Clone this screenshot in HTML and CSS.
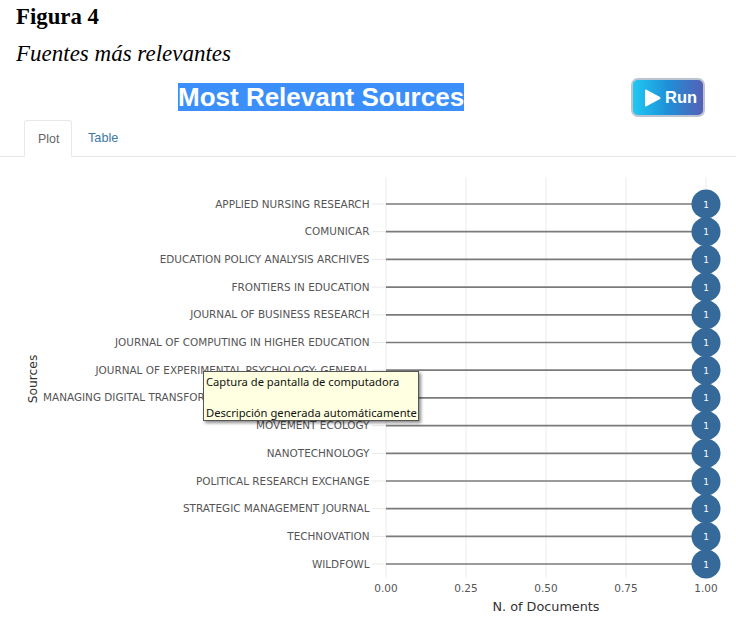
FILE: index.html
```html
<!DOCTYPE html>
<html lang="es">
<head>
<meta charset="utf-8">
<title>Figura 4</title>
<link rel="stylesheet" href="styles.css">
</head>
<body>
<div class="page">
  <h1 class="fig-num">Figura 4</h1>
  <p class="fig-title">Fuentes más relevantes</p>
  <div class="title-row">
    <h2 class="app-title"><span class="selected">Most Relevant Sources</span></h2>
    <button class="run-btn" type="button">
      <svg class="run-icon" width="17" height="18" viewBox="0 0 17 18"><path d="M1 1.5 Q1 0 2.4 .7 L16 8 Q17 9 16 10 L2.4 17.3 Q1 18 1 16.5 Z" fill="#fff"/></svg>
      <span>Run</span>
    </button>
  </div>
  <div class="tabs">
    <a class="tab active">Plot</a>
    <a class="tab">Table</a>
  </div>
  <div class="plot">
    <svg class="chart" width="736" height="465" viewBox="0 157 736 465">
      <g class="grid">
        <line x1="386" x2="386" y1="177" y2="578"/>
        <line x1="466" x2="466" y1="177" y2="578"/>
        <line x1="546" x2="546" y1="177" y2="578"/>
        <line x1="626" x2="626" y1="177" y2="578"/>
        <line x1="706" x2="706" y1="177" y2="578"/>
      </g>
      <g class="rows">
        <g><line class="tick" x1="372" x2="386" y1="204" y2="204"/><line class="stem" x1="386" x2="706" y1="204" y2="204"/><circle cx="706" cy="204" r="14.5"/><text class="val" x="706" y="207.5">1</text><text class="lab" x="369.5" y="207.5">APPLIED NURSING RESEARCH</text></g>
        <g><line class="tick" x1="372" x2="386" y1="231.7" y2="231.7"/><line class="stem" x1="386" x2="706" y1="231.7" y2="231.7"/><circle cx="706" cy="231.7" r="14.5"/><text class="val" x="706" y="235.2">1</text><text class="lab" x="369.5" y="235.2">COMUNICAR</text></g>
        <g><line class="tick" x1="372" x2="386" y1="259.4" y2="259.4"/><line class="stem" x1="386" x2="706" y1="259.4" y2="259.4"/><circle cx="706" cy="259.4" r="14.5"/><text class="val" x="706" y="262.9">1</text><text class="lab" x="369.5" y="262.9">EDUCATION POLICY ANALYSIS ARCHIVES</text></g>
        <g><line class="tick" x1="372" x2="386" y1="287.1" y2="287.1"/><line class="stem" x1="386" x2="706" y1="287.1" y2="287.1"/><circle cx="706" cy="287.1" r="14.5"/><text class="val" x="706" y="290.6">1</text><text class="lab" x="369.5" y="290.6">FRONTIERS IN EDUCATION</text></g>
        <g><line class="tick" x1="372" x2="386" y1="314.8" y2="314.8"/><line class="stem" x1="386" x2="706" y1="314.8" y2="314.8"/><circle cx="706" cy="314.8" r="14.5"/><text class="val" x="706" y="318.3">1</text><text class="lab" x="369.5" y="318.3">JOURNAL OF BUSINESS RESEARCH</text></g>
        <g><line class="tick" x1="372" x2="386" y1="342.5" y2="342.5"/><line class="stem" x1="386" x2="706" y1="342.5" y2="342.5"/><circle cx="706" cy="342.5" r="14.5"/><text class="val" x="706" y="346">1</text><text class="lab" x="369.5" y="346">JOURNAL OF COMPUTING IN HIGHER EDUCATION</text></g>
        <g><line class="tick" x1="372" x2="386" y1="370.2" y2="370.2"/><line class="stem" x1="386" x2="706" y1="370.2" y2="370.2"/><circle cx="706" cy="370.2" r="14.5"/><text class="val" x="706" y="373.7">1</text><text class="lab" x="369.5" y="373.7">JOURNAL OF EXPERIMENTAL PSYCHOLOGY: GENERAL</text></g>
        <g><line class="tick" x1="372" x2="386" y1="397.9" y2="397.9"/><line class="stem" x1="386" x2="706" y1="397.9" y2="397.9"/><circle cx="706" cy="397.9" r="14.5"/><text class="val" x="706" y="401.4">1</text><text class="lab lab-start" x="43" y="401.4">MANAGING DIGITAL TRANSFORMATION</text></g>
        <g><line class="tick" x1="372" x2="386" y1="425.6" y2="425.6"/><line class="stem" x1="386" x2="706" y1="425.6" y2="425.6"/><circle cx="706" cy="425.6" r="14.5"/><text class="val" x="706" y="429.1">1</text><text class="lab" x="369.5" y="429.1">MOVEMENT ECOLOGY</text></g>
        <g><line class="tick" x1="372" x2="386" y1="453.3" y2="453.3"/><line class="stem" x1="386" x2="706" y1="453.3" y2="453.3"/><circle cx="706" cy="453.3" r="14.5"/><text class="val" x="706" y="456.8">1</text><text class="lab" x="369.5" y="456.8">NANOTECHNOLOGY</text></g>
        <g><line class="tick" x1="372" x2="386" y1="481" y2="481"/><line class="stem" x1="386" x2="706" y1="481" y2="481"/><circle cx="706" cy="481" r="14.5"/><text class="val" x="706" y="484.5">1</text><text class="lab" x="369.5" y="484.5">POLITICAL RESEARCH EXCHANGE</text></g>
        <g><line class="tick" x1="372" x2="386" y1="508.7" y2="508.7"/><line class="stem" x1="386" x2="706" y1="508.7" y2="508.7"/><circle cx="706" cy="508.7" r="14.5"/><text class="val" x="706" y="512.2">1</text><text class="lab" x="369.5" y="512.2">STRATEGIC MANAGEMENT JOURNAL</text></g>
        <g><line class="tick" x1="372" x2="386" y1="536.4" y2="536.4"/><line class="stem" x1="386" x2="706" y1="536.4" y2="536.4"/><circle cx="706" cy="536.4" r="14.5"/><text class="val" x="706" y="539.9">1</text><text class="lab" x="369.5" y="539.9">TECHNOVATION</text></g>
        <g><line class="tick" x1="372" x2="386" y1="564" y2="564"/><line class="stem" x1="386" x2="706" y1="564" y2="564"/><circle cx="706" cy="564" r="14.5"/><text class="val" x="706" y="567.5">1</text><text class="lab" x="369.5" y="567.5">WILDFOWL</text></g>
      </g>
      <g class="xticks">
        <text x="386" y="592">0.00</text>
        <text x="466" y="592">0.25</text>
        <text x="546" y="592">0.50</text>
        <text x="626" y="592">0.75</text>
        <text x="706" y="592">1.00</text>
      </g>
      <text class="axis-title" x="546" y="611">N. of Documents</text>
      <text class="axis-title axis-y" transform="translate(37 379) rotate(-90)">Sources</text>
    </svg>
    <div class="tooltip">
      <div>Captura de pantalla de computadora</div>
      <div class="blank">&nbsp;</div>
      <div>Descripción generada automáticamente</div>
    </div>
  </div>
</div>
</body>
</html>
```

FILE: styles.css
```css
* { box-sizing: border-box; }
html, body { margin: 0; padding: 0; background: #fff; }
.page { width: 736px; height: 622px; overflow: hidden; position: relative; }
.fig-num {
  margin: 0;
  padding: 5px 0 0 16px;
  font: bold 22.8px/24px "Liberation Serif", serif;
  color: #000;
}
.fig-title {
  margin: 0;
  padding: 13px 0 0 16px;
  font: italic 23px/24px "Liberation Serif", serif;
  color: #000;
}
.title-row {
  display: flex;
  align-items: flex-start;
  height: 54px;
  padding-top: 16px;
}
.app-title {
  margin: 0 0 0 178px;
  padding-top: 1px;
  font: bold 26px/28px "Liberation Sans", sans-serif;
  color: #fff;
}
.selected { background: #3b8ffb; display: inline-block; height: 28px; }
.run-btn {
  margin: -4px 0 0 167px;
  width: 74px;
  height: 39px;
  display: flex;
  align-items: center;
  gap: 4px;
  padding: 0 0 0 11px;
  border: 2px solid #bcc4d2;
  border-radius: 7px;
  background: linear-gradient(90deg, #1fc8f2 0%, #1f8fd8 50%, #5560b6 100%);
  color: #fff;
  font: bold 16.5px "Liberation Sans", sans-serif;
}
.run-icon { flex: none; }
.tabs {
  display: flex;
  height: 37px;
  padding-left: 24px;
  border-bottom: 1px solid #e6e6e6;
}
.tab {
  height: 37px;
  padding: 0 16px;
  font: 12.7px/36px "Liberation Sans", sans-serif;
  color: #3c78a8;
}
.tab.active {
  width: 48px;
  padding: 0 13px;
  font-size: 12.4px;
  color: #666;
  background: #fff;
  border: 1px solid #e8e8e8;
  border-bottom-color: #fff;
  border-radius: 3px 3px 0 0;
}
.plot { position: relative; }
.chart { display: block; font-family: "DejaVu Sans", sans-serif; }
.grid line { stroke: #ececec; stroke-width: 1; }
.tick { stroke: #e8e8e8; stroke-width: 1; }
.stem { stroke: #7a7a7a; stroke-width: 1.7; }
.rows circle { fill: #35699a; }
.val { fill: #fff; font-size: 9px; text-anchor: middle; }
.lab { fill: #555; font-size: 10.45px; text-anchor: end; }
.lab-start { text-anchor: start; }
.xticks text { fill: #555; font-size: 10.5px; text-anchor: middle; }
.axis-title { fill: #333; font-size: 12.8px; text-anchor: middle; }
.axis-y { font-size: 12.3px; }
.tooltip {
  position: absolute;
  left: 203px;
  top: 214px;
  width: 216px;
  height: 50px;
  padding: 2px 0 0 2px;
  background: #ffffe1;
  border: 1px solid #555;
  box-shadow: 2px 2px 3px rgba(0,0,0,.45);
  font: 11.2px/15.3px "Noto Sans", sans-serif;
  color: #111;
  white-space: nowrap;
}
```
